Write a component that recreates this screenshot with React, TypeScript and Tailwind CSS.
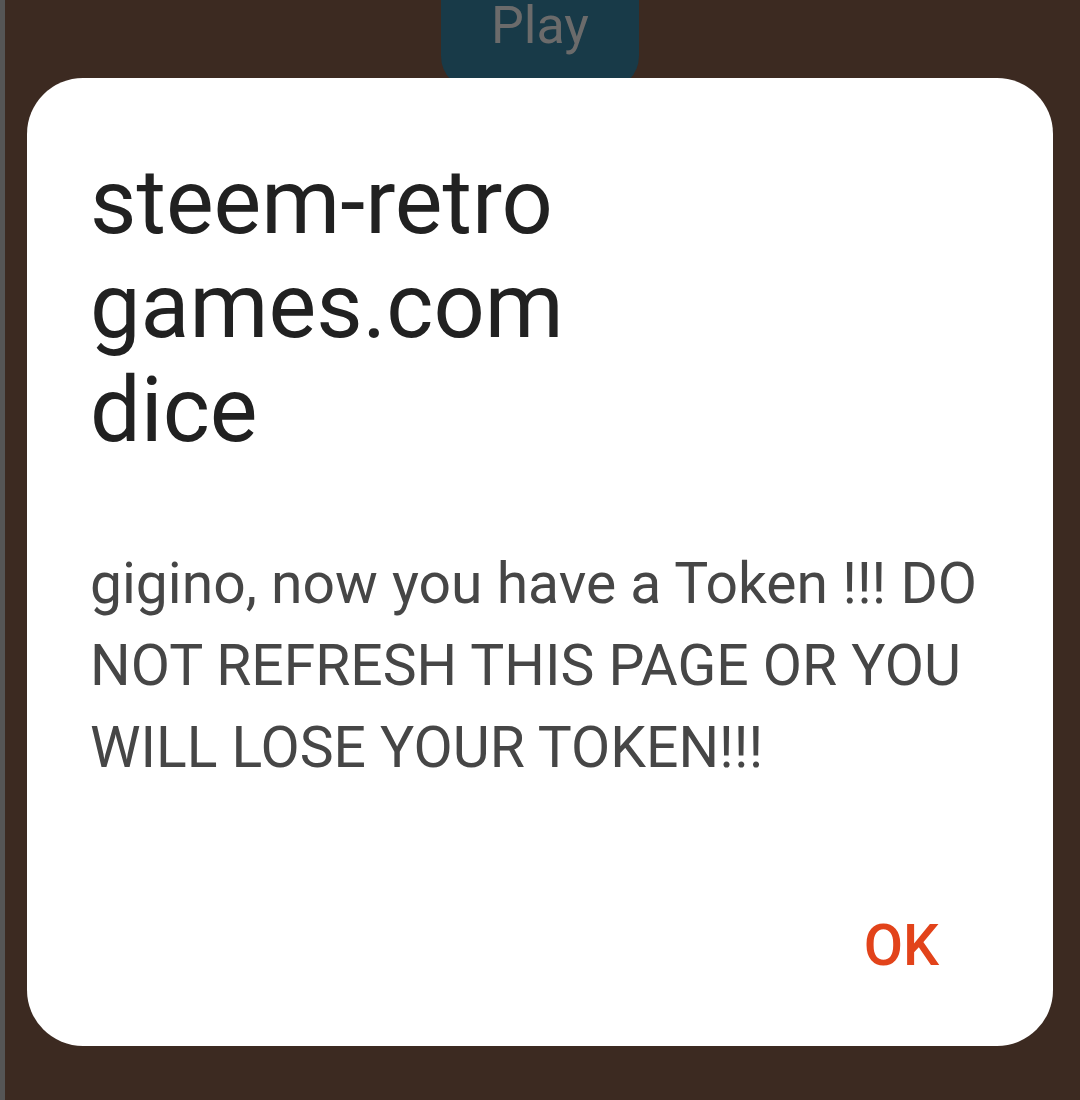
export default function App() {
    return (
        <div className="flex h-[1100px] w-[1080px] overflow-hidden bg-[#3c2a21]" style={{ fontFamily: "Roboto, 'Noto Sans', sans-serif" }}>
            <div className="h-full w-[5px] shrink-0 bg-[#555555]" />
            <div className="flex flex-1 flex-col items-center">
                <div className="relative -ml-[5px] flex h-[90px] w-[198px] shrink-0 justify-center rounded-b-[34px] bg-[#183a48]">
                    <span className="mt-[-4px] text-[52px] leading-[60px] text-[#6b6b6b]">Play</span>
                </div>
                <div className="relative z-10 -ml-[5px] -mt-[12px] flex h-[968px] w-[1026px] flex-col rounded-[56px] bg-white pl-[63px] pr-[60px]">
                    <h1 className="mt-[73px] text-[90px] font-normal leading-[104px] text-[#212121]">
                        steem-retro
                        <br />
                        games.com
                        <br />
                        dice
                    </h1>
                    <p className="mt-[80px] text-[57px] leading-[82px] text-[#464646]">
                        gigino, now you have a Token !!! DO NOT REFRESH THIS PAGE OR YOU WILL LOSE YOUR TOKEN!!!
                    </p>
                    <div className="mt-auto mb-[70px] flex justify-end pr-[54px]">
                        <button className="text-[57px] font-medium leading-[60px] text-[#e2431a]">OK</button>
                    </div>
                </div>
            </div>
        </div>
    )
}
